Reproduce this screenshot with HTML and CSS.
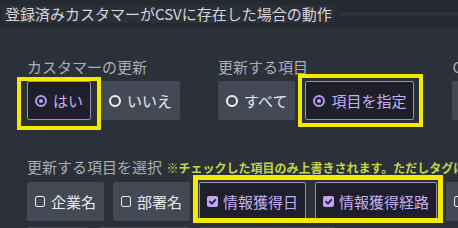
FILE: index.html
```html
<!DOCTYPE html>
<html lang="ja">
<head>
<meta charset="utf-8">
<link rel="stylesheet" href="styles.css">
</head>
<body>
<div class="page">
  <div class="header">
    <span class="title">登録済みカスタマーがCSVに存在した場合の動作</span>
    <span class="rule"></span>
  </div>

  <div class="groups">
    <div class="group">
      <div class="label">カスタマーの更新</div>
      <div class="btns">
        <span class="btn sel"><span class="radio on"></span>はい</span>
        <span class="btn"><span class="radio"></span>いいえ</span>
      </div>
    </div>
    <div class="group">
      <div class="label">更新する項目</div>
      <div class="btns">
        <span class="btn"><span class="radio"></span>すべて</span>
        <span class="btn sel"><span class="radio on"></span>項目を指定</span>
      </div>
    </div>
    <div class="group">
      <div class="label">CSVが空欄</div>
      <div class="btns">
        <span class="btn"><span class="radio"></span>無視</span>
      </div>
    </div>
  </div>

  <div class="section">
    <div class="label">更新する項目を選択 <span class="note">※チェックした項目のみ上書きされます。ただしタグは</span></div>
    <div class="checks">
      <span class="btn"><span class="cb"></span>企業名</span>
      <span class="btn"><span class="cb"></span>部署名</span>
      <span class="btn sel"><span class="cb on"><svg viewBox="0 0 11 11" width="11" height="11"><path d="M2.8 5.7 L4.8 7.6 L8.3 3.8" fill="none" stroke="#262236" stroke-width="1.8" stroke-linecap="round" stroke-linejoin="round"/></svg></span>情報獲得日</span>
      <span class="btn sel"><span class="cb on"><svg viewBox="0 0 11 11" width="11" height="11"><path d="M2.8 5.7 L4.8 7.6 L8.3 3.8" fill="none" stroke="#262236" stroke-width="1.8" stroke-linecap="round" stroke-linejoin="round"/></svg></span>情報獲得経路</span>
      <span class="btn"><span class="cb"></span>苗字</span>
      <span class="btn"><span class="cb"></span>名前</span>
      <span class="btn"><span class="cb"></span>電話番号</span>
      <span class="btn"><span class="cb"></span>メールアドレス</span>
    </div>
  </div>

  <span class="mark m1"></span>
  <span class="mark m2"></span>
  <span class="mark m3"></span>
</div>
</body>
</html>
```

FILE: styles.css
```css
html, body {
  margin: 0;
  padding: 0;
  background: #2c3139;
  overflow: hidden;
}
.page {
  position: relative;
  width: 458px;
  height: 228px;
  overflow: hidden;
  font-family: "Noto Sans CJK JP", "Noto Sans", sans-serif;
}
.header {
  height: 28px;
  background: #252930;
  display: flex;
  align-items: center;
}
.title {
  margin-left: 2px;
  padding: 0 3px;
  height: 18px;
  line-height: 18px;
  font-size: 15px;
  color: #d3d6db;
  background: #2b2f37;
  white-space: nowrap;
}
.rule {
  flex: 1;
  height: 4px;
  margin-left: 4px;
  margin-top: -1px;
  background: repeating-linear-gradient(90deg, #30353d 0 1px, #2a2e35 1px 2px);
}
.groups {
  display: flex;
  gap: 38px;
  padding-left: 27px;
  margin-top: 29px;
  white-space: nowrap;
}
.label {
  font-size: 15px;
  line-height: 20px;
  color: #a8aeb7;
  white-space: nowrap;
}
.btns {
  display: flex;
  gap: 10px;
  margin-top: 4px;
}
.btn {
  box-sizing: border-box;
  height: 39px;
  display: inline-flex;
  align-items: center;
  gap: 6px;
  padding: 0 7px;
  background: #434a56;
  color: #e7e9ec;
  font-size: 15px;
  white-space: nowrap;
  border: 1px solid #434a56;
  border-radius: 2px;
  flex: none;
}
.btn.sel {
  background: #1f1f2c;
  border-color: #9a8fbf;
  color: #c3b0f2;
}
.radio {
  box-sizing: border-box;
  width: 12px;
  height: 12px;
  border-radius: 50%;
  border: 2px solid #f1f1f1;
  flex: none;
  position: relative;
}
.radio.on {
  border-color: #b79ded;
}
.radio.on::after {
  content: "";
  position: absolute;
  left: 2px;
  top: 2px;
  width: 4px;
  height: 4px;
  border-radius: 50%;
  background: #b79ded;
}
.section {
  padding-left: 27px;
  margin-top: 37px;
}
.note {
  font-size: 12px;
  font-weight: bold;
  color: #c6d64a;
  margin-left: 1px;
}
.checks {
  display: flex;
  flex-wrap: wrap;
  gap: 6px 9px;
  margin-top: 4px;
  width: 520px;
}
.cb {
  box-sizing: border-box;
  width: 10px;
  height: 11px;
  border: 1.5px solid #eeeeee;
  border-radius: 2px;
  flex: none;
}
.cb.on {
  width: 11px;
  height: 11px;
  border: none;
  background: #bfa6ef;
  display: inline-flex;
  margin-right: -1px;
}
.mark {
  position: absolute;
  box-sizing: border-box;
  border: 4px solid #f4ea00;
}
.m1 { left: 17px; top: 77px; width: 84px; height: 53px; }
.m2 { left: 298px; top: 74px; width: 125px; height: 53px; }
.m3 { left: 193px; top: 175px; width: 250px; height: 48px; border-width: 5px; }
```
